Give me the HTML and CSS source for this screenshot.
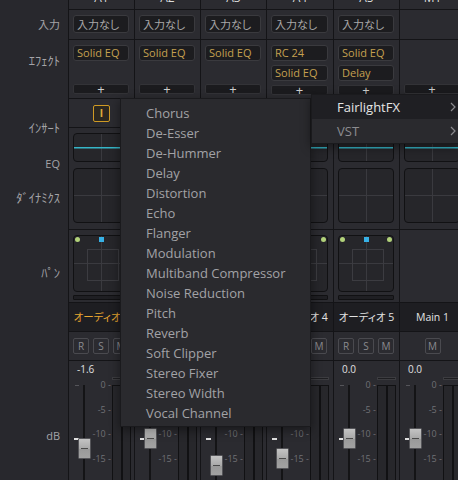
FILE: index.html
```html
<!DOCTYPE html>
<html lang="ja">
<head>
    <meta charset="UTF-8">
    <title>Fairlight Mixer</title>
    <link rel="stylesheet" href="styles.css">
</head>
<body>
    <div class="mixer">
        <!-- labels -->
        <div class="labels">
            <div class="row head"></div>
            <div class="row input"><span class="lbl jp">入力</span></div>
            <div class="row fx"><span class="lbl kana">ｴﾌｪｸﾄ</span></div>
            <div class="row insert"><span class="lbl kana">ｲﾝｻｰﾄ</span></div>
            <div class="row eqdyn"><span class="lbl">EQ</span><span class="lbl kana dyn-lbl">ﾀﾞｲﾅﾐｸｽ</span></div>
            <div class="row pan"><span class="lbl kana">ﾊﾟﾝ</span></div>
            <div class="row name"></div>
            <div class="row rsm"></div>
            <div class="row fader"><span class="lbl db">dB</span></div>
        </div>

        <!-- A1 -->
        <div class="strip">
            <div class="row head"><span>A1</span></div>
            <div class="row input"><div class="box jp">入力なし</div></div>
            <div class="row fx"><div class="fx-box">Solid EQ</div><div class="add">+</div></div>
            <div class="row insert"><span class="ins-btn">I</span></div>
            <div class="row eqdyn"><div class="eq"></div><div class="dyn"></div></div>
            <div class="row pan">
                <div class="pan-box"><i class="dot l"></i><i class="dot r"></i><i class="puck"></i></div>
                <div class="pan-bar"></div>
            </div>
            <div class="row name selected">オーディオ 1</div>
            <div class="row rsm"><span class="btn">R</span><span class="btn">S</span><span class="btn">M</span></div>
            <div class="row fader">
                <div class="val">-1.6</div>
                <div class="fader-body">
                    <div class="track"><i class="tick-dim"></i><i class="tick-unity"></i><i class="rail"></i><i class="cap" style="top: 61px"></i></div>
                    <div class="scale"><span>0 -</span><span>-5 -</span><span>-10 -</span><span>-15 -</span></div>
                    <div class="meter"><div class="meter-cap"></div><div class="meter-bars"><i></i><i></i></div></div>
                </div>
            </div>
        </div>

        <!-- A2 -->
        <div class="strip">
            <div class="row head"><span>A2</span></div>
            <div class="row input"><div class="box jp">入力なし</div></div>
            <div class="row fx"><div class="fx-box">Solid EQ</div><div class="add">+</div></div>
            <div class="row insert"></div>
            <div class="row eqdyn"><div class="eq"></div><div class="dyn"></div></div>
            <div class="row pan">
                <div class="pan-box"><i class="dot l"></i><i class="dot r"></i><i class="puck"></i></div>
                <div class="pan-bar"></div>
            </div>
            <div class="row name">オーディオ 2</div>
            <div class="row rsm"><span class="btn">R</span><span class="btn">S</span><span class="btn">M</span></div>
            <div class="row fader">
                <div class="val">0.0</div>
                <div class="fader-body">
                    <div class="track"><i class="tick-dim"></i><i class="tick-unity"></i><i class="rail"></i><i class="cap" style="top: 51px"></i></div>
                    <div class="scale"><span>0 -</span><span>-5 -</span><span>-10 -</span><span>-15 -</span></div>
                    <div class="meter"><div class="meter-cap"></div><div class="meter-bars"><i></i><i></i></div></div>
                </div>
            </div>
        </div>

        <!-- A3 -->
        <div class="strip">
            <div class="row head"><span>A3</span></div>
            <div class="row input"><div class="box jp">入力なし</div></div>
            <div class="row fx"><div class="fx-box">Solid EQ</div><div class="add">+</div></div>
            <div class="row insert"></div>
            <div class="row eqdyn"><div class="eq"></div><div class="dyn"></div></div>
            <div class="row pan">
                <div class="pan-box"><i class="dot l"></i><i class="dot r"></i><i class="puck"></i></div>
                <div class="pan-bar"></div>
            </div>
            <div class="row name">オーディオ 3</div>
            <div class="row rsm"><span class="btn">R</span><span class="btn">S</span><span class="btn">M</span></div>
            <div class="row fader">
                <div class="val">-4.2</div>
                <div class="fader-body">
                    <div class="track"><i class="tick-dim"></i><i class="tick-unity"></i><i class="rail"></i><i class="cap" style="top: 78px"></i></div>
                    <div class="scale"><span>0 -</span><span>-5 -</span><span>-10 -</span><span>-15 -</span></div>
                    <div class="meter"><div class="meter-cap"></div><div class="meter-bars"><i></i><i></i></div></div>
                </div>
            </div>
        </div>

        <!-- A4 -->
        <div class="strip wide">
            <div class="row head"><span>A4</span></div>
            <div class="row input"><div class="box jp">入力なし</div></div>
            <div class="row fx"><div class="fx-box">RC 24</div><div class="fx-box">Solid EQ</div><div class="add">+</div></div>
            <div class="row insert"></div>
            <div class="row eqdyn"><div class="eq"></div><div class="dyn"></div></div>
            <div class="row pan">
                <div class="pan-box"><i class="dot l"></i><i class="dot r"></i><i class="puck"></i></div>
                <div class="pan-bar"></div>
            </div>
            <div class="row name">オーディオ 4</div>
            <div class="row rsm"><span class="btn">R</span><span class="btn">S</span><span class="btn">M</span></div>
            <div class="row fader">
                <div class="val">-3.0</div>
                <div class="fader-body">
                    <div class="track"><i class="tick-dim"></i><i class="tick-unity"></i><i class="rail"></i><i class="cap" style="top: 71px"></i></div>
                    <div class="scale"><span>0 -</span><span>-5 -</span><span>-10 -</span><span>-15 -</span></div>
                    <div class="meter"><div class="meter-cap"></div><div class="meter-bars"><i></i><i></i></div></div>
                </div>
            </div>
        </div>

        <!-- A5 -->
        <div class="strip">
            <div class="row head"><span>A5</span></div>
            <div class="row input"><div class="box jp">入力なし</div></div>
            <div class="row fx"><div class="fx-box">Solid EQ</div><div class="fx-box">Delay</div><div class="add">+</div></div>
            <div class="row insert"></div>
            <div class="row eqdyn"><div class="eq"></div><div class="dyn"></div></div>
            <div class="row pan">
                <div class="pan-box"><i class="dot l"></i><i class="dot r"></i><i class="puck"></i></div>
                <div class="pan-bar"></div>
            </div>
            <div class="row name">オーディオ 5</div>
            <div class="row rsm"><span class="btn">R</span><span class="btn">S</span><span class="btn">M</span></div>
            <div class="row fader">
                <div class="val">0.0</div>
                <div class="fader-body">
                    <div class="track"><i class="tick-dim"></i><i class="tick-unity"></i><i class="rail"></i><i class="cap" style="top: 51px"></i></div>
                    <div class="scale"><span>0 -</span><span>-5 -</span><span>-10 -</span><span>-15 -</span></div>
                    <div class="meter"><div class="meter-cap"></div><div class="meter-bars"><i></i><i></i></div></div>
                </div>
            </div>
        </div>

        <!-- Main 1 -->
        <div class="strip">
            <div class="row head"><span>M1</span></div>
            <div class="row input"></div>
            <div class="row fx"><div class="add">+</div></div>
            <div class="row insert"></div>
            <div class="row eqdyn"><div class="eq"></div><div class="dyn"></div></div>
            <div class="row pan"></div>
            <div class="row name">Main 1</div>
            <div class="row rsm center"><span class="btn">M</span></div>
            <div class="row fader">
                <div class="val">0.0</div>
                <div class="fader-body">
                    <div class="track"><i class="tick-dim"></i><i class="tick-unity"></i><i class="rail"></i><i class="cap" style="top: 51px"></i></div>
                    <div class="scale"><span>0 -</span><span>-5 -</span><span>-10 -</span><span>-15 -</span></div>
                    <div class="meter"><div class="meter-cap"></div><div class="meter-bars"><i></i><i></i></div></div>
                </div>
            </div>
        </div>
    </div>

    <!-- effect list popup -->
    <ul class="menu">
        <li>Chorus</li>
        <li>De-Esser</li>
        <li>De-Hummer</li>
        <li>Delay</li>
        <li>Distortion</li>
        <li>Echo</li>
        <li>Flanger</li>
        <li>Modulation</li>
        <li>Multiband Compressor</li>
        <li>Noise Reduction</li>
        <li>Pitch</li>
        <li>Reverb</li>
        <li>Soft Clipper</li>
        <li>Stereo Fixer</li>
        <li>Stereo Width</li>
        <li>Vocal Channel</li>
    </ul>

    <div class="submenu">
        <div class="sub-item active">
            <span>FairlightFX</span>
            <svg width="6" height="10" viewBox="0 0 6 10"><polyline points="1,1 5,5 1,9" fill="none" stroke="#8a8a8e" stroke-width="1.2"/></svg>
        </div>
        <div class="sub-item">
            <span>VST</span>
            <svg width="6" height="10" viewBox="0 0 6 10"><polyline points="1,1 5,5 1,9" fill="none" stroke="#8a8a8e" stroke-width="1.2"/></svg>
        </div>
    </div>
</body>
</html>
```

FILE: styles.css
```css
* {
    margin: 0;
    padding: 0;
    box-sizing: border-box;
}

body {
    width: 458px;
    height: 480px;
    overflow: hidden;
    position: relative;
    background: #2b2b30;
    font-family: 'Open Sans', 'Noto Sans CJK JP', sans-serif;
    color: #dcdcdc;
}

.jp {
    font-family: 'Noto Sans CJK JP', sans-serif;
    font-feature-settings: 'palt';
}

.kana {
    font-family: 'Noto Sans CJK JP', sans-serif;
}

.mixer {
    display: flex;
    height: 480px;
}

/* label column */
.labels {
    width: 68px;
    flex: none;
    background: #28282d;
    color: #a4a4a8;
    text-align: right;
}

.labels .row {
    border-bottom-color: transparent;
    display: block;
    padding: 0 8px 0 0;
    background: none;
}

.lbl {
    display: block;
    font-size: 11px;
    line-height: 12px;
    white-space: nowrap;
}

.lbl.kana {
    font-size: 12.5px;
}

.labels .input .lbl { margin-top: 8px; }
.labels .fx .lbl { margin-top: 7px; }
.labels .insert .lbl { margin-top: 8px; }
.labels .eqdyn .lbl { margin-top: 7px; }
.labels .eqdyn .dyn-lbl { margin-top: 22px; }
.labels .pan .lbl { margin-top: 7px; }
.labels .db { margin-top: 32px; }

/* channel strips */
.strip {
    width: 66px;
    flex: none;
    display: flex;
    flex-direction: column;
    border-left: 1px solid #141417;
    background: #2b2b30;
}

.strip.wide {
    width: 67px;
}

.row {
    flex: none;
    border-bottom: 1px solid #141417;
}

.head {
    height: 10px;
    overflow: hidden;
    text-align: center;
    font-size: 12px;
    line-height: 12px;
    color: #dcdcdc;
}

.head span {
    display: block;
    margin-top: -8px;
}

.input {
    height: 30px;
    padding: 5px 5px 0 4px;
}

.box {
    height: 18px;
    background: #1c1c1f;
    border: 1px solid #3a3a3e;
    border-radius: 3px;
    padding-left: 3px;
    font-size: 11px;
    line-height: 16px;
    color: #a8a8a8;
}

.fx {
    height: 59px;
    padding: 5px 5px 4px 4px;
    display: flex;
    flex-direction: column;
    gap: 4px;
}

.fx-box {
    height: 16px;
    background: #1c1c1f;
    border: 1px solid #3a3a3e;
    border-radius: 3px;
    padding-left: 3px;
    font-size: 11px;
    line-height: 14px;
    color: #c4a050;
}

.add {
    margin-top: auto;
    height: 10px;
    background: #1b1b1e;
    border: 1px solid #333337;
    border-radius: 2px;
    text-align: center;
    font-size: 13px;
    line-height: 8px;
    color: #cfcfcf;
}

.insert {
    height: 29px;
    display: flex;
    align-items: center;
    justify-content: center;
}

.ins-btn {
    width: 17px;
    height: 17px;
    border: 1.5px solid #cf9a24;
    border-radius: 2px;
    background: #2c2820;
    color: #e2b03c;
    font-size: 10px;
    font-weight: 700;
    line-height: 14px;
    text-align: center;
}

.eqdyn {
    height: 102px;
    padding: 5px 5px 0 4px;
}

.eq {
    height: 29px;
    border: 1px solid #111113;
    border-radius: 4px;
    background:
        linear-gradient(#35b6c8, #35b6c8) 0 13px / 100% 1.5px no-repeat,
        linear-gradient(#3a3a3f, #3a3a3f) center / 1px 100% no-repeat,
        #26262a;
}

.dyn {
    margin-top: 6px;
    height: 55px;
    border: 1px solid #111113;
    border-radius: 4px;
    background:
        linear-gradient(#3a3a3f, #3a3a3f) center / 100% 1px no-repeat,
        linear-gradient(#3a3a3f, #3a3a3f) center / 1px 100% no-repeat,
        #26262a;
}

.pan {
    height: 73px;
    padding: 5px 5px 0 4px;
}

.pan-box {
    position: relative;
    height: 57px;
    border: 1px solid #111113;
    border-radius: 4px;
    background:
        linear-gradient(#3a3a3f, #3a3a3f) center / 100% 1px no-repeat,
        linear-gradient(#3a3a3f, #3a3a3f) center / 1px 100% no-repeat,
        #26262a;
}

.pan-box::before {
    content: '';
    position: absolute;
    left: 13px;
    top: 13px;
    width: 30px;
    height: 30px;
    border: 1px solid #3c3c41;
}

.dot {
    position: absolute;
    top: 1px;
    width: 5px;
    height: 5px;
    border-radius: 50%;
    background: #b2d27a;
}

.dot.l { left: 1px; }
.dot.r { right: 1px; }

.puck {
    position: absolute;
    top: 1px;
    left: 25px;
    width: 5px;
    height: 5px;
    background: #37b1e6;
}

.pan-bar {
    margin-top: 3px;
    height: 5px;
    border: 1px solid #111113;
    border-radius: 1px;
    background: #1f1f23;
}

.name {
    height: 29px;
    background: #1e1e22;
    text-align: center;
    font-size: 10.5px;
    line-height: 28px;
    color: #e2e2e2;
    white-space: nowrap;
    overflow: hidden;
    font-feature-settings: 'palt';
}

.name.selected {
    color: #e8a630;
}

.rsm {
    height: 29px;
    display: flex;
    align-items: center;
    gap: 4px;
    padding-left: 4px;
}

.rsm.center {
    justify-content: center;
    padding-left: 0;
}

.btn {
    width: 16px;
    height: 16px;
    border: 1px solid #4a4a4f;
    border-radius: 2px;
    font-size: 10px;
    line-height: 14px;
    text-align: center;
    color: #8a8a8e;
}

/* fader section */
.fader {
    flex: 1;
    border-bottom: none;
    padding-top: 2px;
}

.val {
    padding-left: 8px;
    font-size: 10px;
    line-height: 12px;
    color: #e0e0e0;
}

.fader-body {
    display: flex;
    margin-top: 2px;
    height: 110px;
}

.track {
    position: relative;
    width: 22px;
}

.tick-dim {
    position: absolute;
    left: 6px;
    top: 8px;
    width: 4px;
    height: 1px;
    background: #55555a;
}

.tick-unity {
    position: absolute;
    left: 5px;
    top: 61px;
    width: 5px;
    height: 1.5px;
    background: #e0e0e0;
}

.rail {
    position: absolute;
    left: 14px;
    top: 8px;
    bottom: 0;
    width: 2px;
    background: #141416;
}

.cap {
    position: absolute;
    left: 9px;
    width: 13px;
    height: 21px;
    border: 1px solid #555559;
    border-radius: 1px;
    background: linear-gradient(#c4c4c4, #a9a9a9 50%, #999 51%, #a2a2a2);
}

.cap::after {
    content: '';
    position: absolute;
    left: 2px;
    right: 2px;
    top: 9px;
    height: 1px;
    background: #4a4a4a;
}

.scale {
    width: 20px;
    padding-top: 2px;
    display: flex;
    flex-direction: column;
    gap: 12.5px;
    font-size: 9px;
    line-height: 12px;
    text-align: right;
    color: #707075;
    white-space: nowrap;
}

.meter {
    width: 19px;
    margin-left: 1px;
}

.meter-cap {
    height: 3px;
    border: 1px solid #3c3c40;
    background: #1e1e21;
}

.meter-bars {
    margin-top: 5px;
    height: 110px;
    display: flex;
    gap: 2px;
    border: 1.5px solid #111113;
    border-bottom: none;
    background: #111113;
}

.meter-bars i {
    flex: 1;
    background: #27272b;
}

/* popups */
.menu {
    position: absolute;
    left: 120px;
    top: 98px;
    width: 191px;
    height: 329px;
    padding-top: 4px;
    list-style: none;
    background: #2a2a2e;
    border: 1px solid #1a1a1d;
    box-shadow: 0 3px 10px rgba(0, 0, 0, 0.45);
}

.menu li {
    height: 20px;
    line-height: 20px;
    padding-left: 25px;
    font-size: 13px;
    color: #a2a2a6;
}

.submenu {
    position: absolute;
    left: 311px;
    top: 94px;
    width: 147px;
    background: #2a2a2e;
    border: 1px solid #1a1a1d;
    border-right: none;
    box-shadow: 0 3px 10px rgba(0, 0, 0, 0.45);
}

.sub-item {
    height: 24px;
    display: flex;
    align-items: center;
    justify-content: space-between;
    padding: 0 2px 0 25px;
    font-size: 13px;
    color: #8c8c90;
}

.sub-item.active {
    background: #1f1f23;
    color: #e4e4e4;
}
```
